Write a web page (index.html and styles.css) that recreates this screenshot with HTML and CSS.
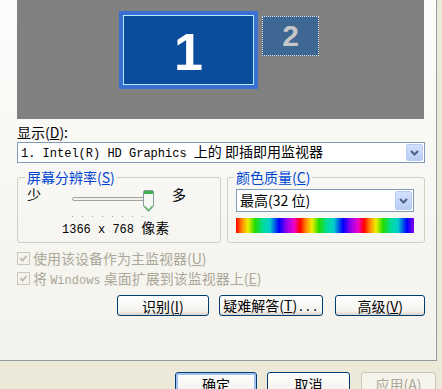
FILE: index.html
```html
<!DOCTYPE html>
<html>
<head>
<meta charset="utf-8">
<link rel="stylesheet" href="styles.css">
</head>
<body>
<div class="dialog">
  <div class="tabpage">
    <div class="monitors">
      <div class="mon1"><div class="mon1-inner">1</div></div>
      <div class="mon2">2</div>
    </div>
    <div class="label">显示(<u>D</u>):</div>
    <div class="combo combo-wide">
      <span class="combo-text"><span class="mono">1. Intel(R) HD Graphics </span>上的 即插即用监视器</span>
      <span class="combo-btn"><svg width="15" height="15" viewBox="0 0 15 15"><path d="M4 6 L7.5 9.5 L11 6" fill="none" stroke="#4d6185" stroke-width="2"/></svg></span>
    </div>
    <div class="groups">
      <fieldset class="group group-res">
        <legend>屏幕分辨率(<u>S</u>)</legend>
        <div class="slider-row">
          <span class="end">少</span>
          <svg class="slider" width="131" height="34" viewBox="0 0 131 34">
            <rect x="31.5" y="13.5" width="78" height="3" rx="1.5" fill="#f2f1ec" stroke="#a3a39b"/>
            <g fill="#9d9d9d">
              <rect x="31" y="32" width="1" height="1"/>
              <rect x="41" y="32" width="1" height="1"/>
              <rect x="51" y="32" width="1" height="1"/>
              <rect x="61" y="32" width="1" height="1"/>
              <rect x="71" y="32" width="1" height="1"/>
              <rect x="81" y="32" width="1" height="1"/>
              <rect x="91" y="32" width="1" height="1"/>
              <rect x="101" y="32" width="1" height="1"/>
            </g>
            <path d="M102.5 8 Q102.5 6.5 104 6.5 L111 6.5 Q112.5 6.5 112.5 8 L112.5 22 L107.5 27.5 L102.5 22 Z" fill="#f7f7f3" stroke="#8c9aa6"/>
            <rect x="103" y="7" width="9" height="3" fill="#3fb14a"/>
            <path d="M103.5 22 L107.5 26.3 L111.5 22" fill="none" stroke="#53b85c" stroke-width="1.2"/>
          </svg>
          <span class="end">多</span>
        </div>
        <div class="res-text"><span class="mono">1366 x 768 </span>像素</div>
      </fieldset>
      <fieldset class="group group-color">
        <legend>颜色质量(<u>C</u>)</legend>
        <div class="combo combo-color">
          <span class="combo-text">最高(32 位)</span>
          <span class="combo-btn"><svg width="15" height="17" viewBox="0 0 15 17"><path d="M4 7 L7.5 10.5 L11 7" fill="none" stroke="#4d6185" stroke-width="2"/></svg></span>
        </div>
        <div class="spectrum"></div>
      </fieldset>
    </div>
    <div class="checks">
      <div class="check"><span class="box"><svg width="11" height="11" viewBox="0 0 11 11"><path d="M2.5 5 L4.5 7.5 L8.5 3" fill="none" stroke="#bdbaa8" stroke-width="1.8"/></svg></span><span class="check-text">使用该设备作为主监视器(<u>U</u>)</span></div>
      <div class="check"><span class="box"><svg width="11" height="11" viewBox="0 0 11 11"><path d="M2.5 5 L4.5 7.5 L8.5 3" fill="none" stroke="#bdbaa8" stroke-width="1.8"/></svg></span><span class="check-text">将 <span class="mono">Windows</span> 桌面扩展到该监视器上(<u>E</u>)</span></div>
    </div>
    <div class="btn-row">
      <button class="btn btn-id">识别(<u>I</u>)</button>
      <button class="btn btn-tr">疑难解答(<u>T</u>)<span class="mono">...</span></button>
      <button class="btn btn-adv">高级(<u>V</u>)</button>
    </div>
  </div>
  <div class="footer">
    <button class="btn btn-ok">确定</button>
    <button class="btn btn-cancel">取消</button>
    <button class="btn btn-apply">应用(<u>A</u>)</button>
  </div>
</div>
</body>
</html>
```

FILE: styles.css
```css
* { box-sizing: border-box; }
html, body { margin: 0; padding: 0; }
body {
  width: 442px;
  height: 389px;
  overflow: hidden;
  background: #ece9d8;
  font-family: "Noto Sans CJK SC", sans-serif;
  font-size: 14px;
  color: #000;
}
.dialog { width: 442px; height: 389px; }
.tabpage {
  width: 437px;
  height: 361px;
  border-right: 1px solid #919b9c;
  border-bottom: 1px solid #919b9c;
  background: linear-gradient(#fcfcfb, #f3f2ec);
  padding: 0 11px 0 17px;
}
.mono { font-family: "Liberation Mono", monospace; font-size: 12px; }

.monitors {
  width: 407px;
  height: 119px;
  background: #808080;
  display: flex;
  align-items: flex-start;
  gap: 4px;
  padding: 11px 0 0 102px;
}
.mon1 {
  width: 139px;
  height: 78px;
  background: #3a6fd3;
  padding: 4px;
}
.mon1-inner {
  height: 100%;
  border: 1px solid #b4ecff;
  background: #0a4d9c;
  color: #fff;
  font: bold 52px/72px "Liberation Sans", sans-serif;
  text-align: center;
  overflow: hidden;
}
.mon2 {
  margin-top: 5px;
  width: 57px;
  height: 40px;
  background: #3e6794;
  border: 1px dotted #e4e4e4;
  color: #c6c6c6;
  font: bold 30px/38px "Liberation Sans", sans-serif;
  text-align: center;
}

.label { margin-top: 4px; line-height: 18px; }
u { text-decoration: underline; }

.combo {
  display: flex;
  align-items: center;
  border: 1px solid #7f9db9;
  background: #fff;
  padding: 0 1px 0 3px;
}
.combo-wide { margin-top: 1px; height: 21px; }
.combo-text { flex: 1; white-space: nowrap; line-height: 19px; }
.combo-btn {
  width: 17px;
  height: 17px;
  flex: none;
  border: 1px solid #b7cbf5;
  border-radius: 2px;
  background: linear-gradient(#d3e0fc, #b8cdf6);
  display: flex;
  align-items: center;
  justify-content: center;
}

.groups { display: flex; gap: 6px; margin-top: 7px; }
.group {
  margin: 0;
  padding: 0;
  min-width: 0;
  height: 73px;
  border: 1px solid #d0d0bf;
  border-radius: 3px;
}
.group legend {
  padding: 0 2px;
  margin-left: 7px;
  line-height: 14px;
  color: #0046d5;
}
.group-res { width: 204px; }
.group-color { width: 198px; }
.group-color legend { margin-left: 6px; }

.slider-row { display: flex; align-items: flex-start; padding-left: 9px; margin-top: 2px; }
.end { line-height: 16px; width: 14px; }
.slider { display: block; margin-top: -2px; }
.res-text { margin-top: 1px; padding-left: 44px; line-height: 16px; white-space: nowrap; }

.combo-color {
  margin: 5px 0 0 8px;
  width: 178px;
  height: 23px;
}
.combo-color .combo-btn { height: 19px; }
.spectrum {
  margin: 6px 0 0 8px;
  width: 178px;
  height: 15px;
  background: repeating-linear-gradient(90deg,
    #ff0000 0px, #ff8800 6px, #eeee00 12px, #22dd00 19px, #00dd99 27px,
    #00cccc 34px, #0000ff 43px, #8800ee 50px, #ee00cc 58px, #ff0000 64px);
}

.checks { margin-top: 5px; color: #aca899; }
.check { display: flex; align-items: center; height: 20px; white-space: nowrap; }
.check-text { white-space: pre; }
.box {
  width: 13px;
  height: 13px;
  flex: none;
  border: 1px solid #cac8bb;
  background: #f4f3ee;
  margin-right: 3px;
  display: flex;
  align-items: center;
  justify-content: center;
}
.box svg { display: block; }

.btn {
  font-family: "Noto Sans CJK SC", sans-serif;
  font-size: 14px;
  color: #000;
  padding: 0;
  border: 1px solid #003c74;
  border-radius: 3px;
  background: linear-gradient(#ffffff, #f3f2ee 80%, #d8d3c7);
  line-height: 18px;
  white-space: nowrap;
}
.btn-row { display: flex; margin-top: 7px; padding-left: 100px; }
.btn-row .btn { height: 21px; }
.btn-id { width: 92px; }
.btn-tr { width: 105px; margin-left: 10px; }
.btn-adv { width: 90px; margin-left: 12px; }

.footer { display: flex; padding: 11px 0 0 175px; }
.footer .btn { height: 24px; }
.btn-ok { width: 82px; box-shadow: inset 0 0 0 2px #a3c1ef; }
.btn-cancel { width: 83px; margin-left: 10px; }
.btn-apply {
  width: 75px;
  margin-left: 11px;
  border-color: #c9c7ba;
  background: #f5f4ea;
  color: #aca899;
}
```
